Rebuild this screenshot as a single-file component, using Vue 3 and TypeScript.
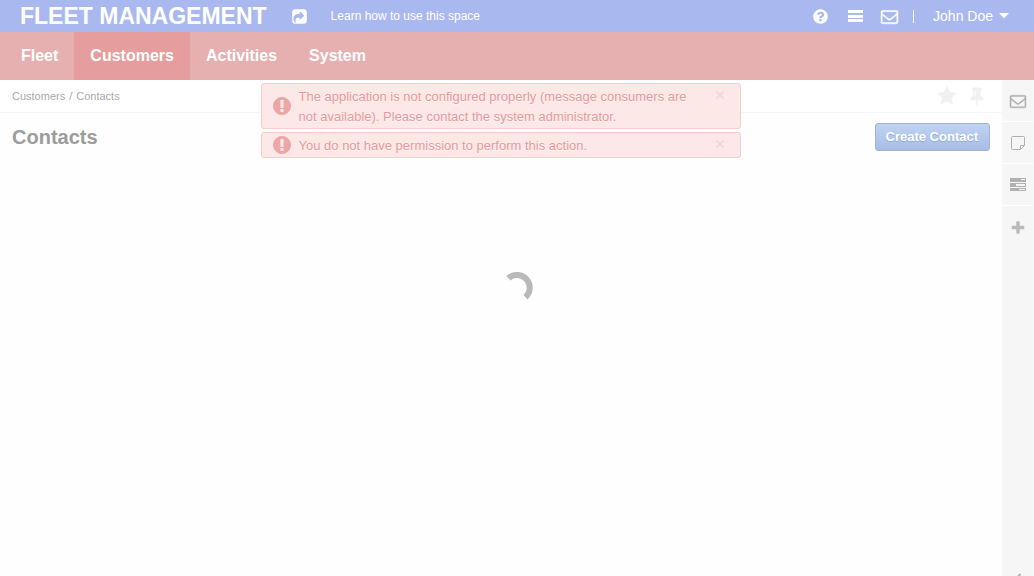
<script setup lang="ts">
import { ref } from 'vue'

interface Notice {
  id: number
  text: string
}

const sections: string[] = ['Fleet', 'Customers', 'Activities', 'System']
const activeSection = ref<string>('Customers')

const notices = ref<Notice[]>([
  {
    id: 1,
    text: 'The application is not configured properly (message consumers are not available). Please contact the system administrator.',
  },
  { id: 2, text: 'You do not have permission to perform this action.' },
])

function dismiss(id: number): void {
  notices.value = notices.value.filter((n) => n.id !== id)
}

const envelope =
  'M1664 1504v-768q-32 36-69 66-268 206-426 338-51 43-83 67t-86.500 48.500-102.500 24.500h-2q-48 0-102.500-24.500t-86.500-48.500-83-67q-158-132-426-338-37-30-69-66v768q0 13 9.500 22.500t22.500 9.500h1472q13 0 22.500-9.500t9.500-22.500zm0-1051v-24.500l-.5-13-3-12.500-5.500-9-9-7.500-14-2.500h-1472q-13 0-22.500 9.500t-9.500 22.500q0 168 147 284 193 152 401 317 6 5 35 29.500t46 37.500 44.500 31.500 50.500 27.500 43 9h2q20 0 43-9t50.500-27.500 44.500-31.500 46-37.500 35-29.500q208-165 401-317 54-43 100.500-115.500t46.500-131.500zm128-37v1088q0 66-47 113t-113 47h-1472q-66 0-113-47t-47-113v-1088q0-66 47-113t113-47h1472q66 0 113 47t47 113z'
</script>

<template>
  <div class="page">
    <header class="topbar">
      <a class="brand" href="#">FLEET MANAGEMENT</a>
      <a class="share" href="#" aria-label="Share">
        <svg class="glyph" viewBox="0 0 1792 1792"><path d="M1005 1197l352-352q19-19 19-45t-19-45l-352-352q-30-31-69-14-40 17-40 59v160q-119 0-216 19.500t-162.500 51-114 79-76.500 95.500-44.500 109-21.500 111.500-5 110.500q0 181 167 404 11 12 25 12 7 0 13-3 22-9 19-33-44-354 62-473 46-52 130-75.500t224-23.500v160q0 42 40 59 12 5 24 5 26 0 45-19zm659-781v960q0 119-84.500 203.500t-203.500 84.500h-960q-119 0-203.500-84.500t-84.500-203.500v-960q0-119 84.500-203.500t203.500-84.500h960q119 0 203.500 84.500t84.500 203.500z" /></svg>
      </a>
      <a class="learn" href="#">Learn how to use this space</a>
      <div class="tools">
        <button type="button" class="tool" aria-label="Help">
          <svg class="glyph" viewBox="0 0 1792 1792"><path d="M1024 1376v-192q0-14-9-23t-23-9h-192q-14 0-23 9t-9 23v192q0 14 9 23t23 9h192q14 0 23-9t9-23zm256-672q0-88-55.500-163t-138.500-116-170-41q-243 0-371 213-15 24 8 42l132 100q7 6 19 6 16 0 25-12 53-68 86-92 34-24 86-24 48 0 85.500 26t37.500 59q0 38-20 61t-68 45q-63 28-115.500 86.500t-52.500 125.500v36q0 14 9 23t23 9h192q14 0 23-9t9-23q0-19 21.500-49.500t54.500-49.500q32-18 49-28.500t46-35 44.500-48 28-60.500 12.500-81zm384 192q0 209-103 385.500t-279.500 279.500-385.500 103-385.500-103-279.500-279.500-103-385.500 103-385.500 279.500-279.500 385.500-103 385.500 103 279.500 279.500 103 385.500z" /></svg>
        </button>
        <button type="button" class="tool" aria-label="Menu">
          <svg class="glyph" viewBox="0 0 17 17"><path d="M1 2h15v3H1zM1 7h15v3H1zM1 11h15v3H1z" /></svg>
        </button>
        <button type="button" class="tool" aria-label="Messages">
          <svg class="glyph bold" viewBox="0 0 1792 1792"><path :d="envelope" /></svg>
        </button>
        <span class="divider"></span>
        <button type="button" class="user">
          John Doe
          <svg class="caret" viewBox="0 0 10 6"><path d="M0 0h10L5 5.500z" /></svg>
        </button>
      </div>
    </header>

    <nav class="nav">
      <a
        v-for="name in sections"
        :key="name"
        href="#"
        class="nav-link"
        :class="{ active: name === activeSection }"
        @click.prevent="activeSection = name"
      >{{ name }}</a>
    </nav>

    <div class="body">
      <main class="main">
        <div class="crumbs">
          <a href="#">Customers</a>
          <span>/</span>
          <span>Contacts</span>
          <div class="marks">
            <button type="button" class="mark" aria-label="Favorite">
              <svg class="mark-icon" viewBox="0 0 1792 1792"><path d="M1728 647q0 22-26 48l-363 354 86 500q1 7 1 20 0 21-10.500 35.500t-30.500 14.500q-19 0-40-12l-449-236-449 236q-22 12-40 12-21 0-31.500-14.500t-10.500-35.500q0-6 2-20l86-500-364-354q-25-27-25-48 0-37 56-46l502-73 225-455q19-41 49-41t49 41l225 455 502 73q56 9 56 46z" /></svg>
            </button>
            <button type="button" class="mark" aria-label="Pin">
              <svg class="mark-icon" viewBox="0 0 1792 1792"><path d="M800 864v-448q0-14-9-23t-23-9-23 9-9 23v448q0 14 9 23t23 9 23-9 9-23zm672 352q0 26-19 45t-45 19h-429l-51 483q-2 12-10.500 20.500t-20.500 8.500h-1q-27 0-32-27l-76-485h-404q-26 0-45-19t-19-45q0-123 78.500-221.500t177.500-98.500v-512q-52 0-90-38t-38-90 38-90 90-38h640q52 0 90 38t38 90-38 90-90 38v512q99 0 177.500 98.500t78.500 221.500z" /></svg>
            </button>
          </div>
        </div>

        <div class="heading">
          <h1>Contacts</h1>
          <button type="button" class="create">Create Contact</button>
        </div>

        <div class="loading" role="status" aria-label="Loading">
          <svg class="spinner" viewBox="0 0 32 32"><path d="M7.500 6.200A12.500 12.500 0 0 1 24.500 25.200" /></svg>
        </div>

        <div class="notices">
          <div v-for="notice in notices" :key="notice.id" class="notice" role="alert">
            <svg class="notice-icon" viewBox="128 128 1536 1536"><path d="M896 128q209 0 385.500 103t279.500 279.500 103 385.500-103 385.500-279.500 279.500-385.500 103-385.500-103-279.500-279.500-103-385.500 103-385.500 279.500-279.500 385.500-103zm128 1247v-190q0-14-9-23.500t-22-9.500h-192q-13 0-23 10t-10 23v190q0 13 10 23t23 10h192q13 0 22-9.500t9-23.500zm-2-344l18-621q0-12-10-18-10-8-24-8h-220q-14 0-24 8-10 6-10 18l17 621q0 10 10 17.500t24 7.500h185q14 0 23.500-7.500t10.500-17.500z" /></svg>
            <p>{{ notice.text }}</p>
            <button type="button" class="close" aria-label="Close" @click="dismiss(notice.id)">
              <svg viewBox="0 0 10 10"><path d="M1.500 1.500l7 7M8.500 1.500l-7 7" /></svg>
            </button>
          </div>
        </div>
      </main>

      <aside class="side">
        <button type="button" class="side-item" aria-label="Emails">
          <svg class="side-icon bold" viewBox="0 0 1792 1792"><path :d="envelope" /></svg>
        </button>
        <button type="button" class="side-item" aria-label="Notes">
          <svg class="side-icon line" viewBox="0 0 16 16"><path d="M10.500 14.500h-8a1 1 0 0 1-1-1v-11a1 1 0 0 1 1-1h11a1 1 0 0 1 1 1v8zM10.500 14.500v-4h4" /></svg>
        </button>
        <button type="button" class="side-item" aria-label="Tasks">
          <svg class="side-icon" viewBox="0 0 16 16"><path fill-rule="evenodd" d="M0 1h16v4H0zM11 2v1h4V2zM0 6h16v4H0zM6 7v2h9V7zM0 11h16v3H0zM9 12v1h6v-1z" /></svg>
        </button>
        <button type="button" class="side-item last" aria-label="Add">
          <svg class="side-icon" viewBox="0 0 1792 1792"><path d="M1600 736v192q0 40-28 68t-68 28h-416v416q0 40-28 68t-68 28h-192q-40 0-68-28t-28-68v-416h-416q-40 0-68-28t-28-68v-192q0-40 28-68t68-28h416v-416q0-40 28-68t68-28h192q40 0 68 28t28 68v416h416q40 0 68 28t28 68z" /></svg>
        </button>
        <button type="button" class="collapse" aria-label="Collapse sidebar">
          <svg viewBox="0 0 8 12"><path d="M6.500 1L1.500 6l5 5" /></svg>
        </button>
      </aside>
    </div>
  </div>
</template>

<style>
body {
  background: #fefefe;
}
</style>

<style scoped>
.page {
  display: flex;
  flex-direction: column;
  height: 100vh;
  overflow: hidden;
  font-family: 'Liberation Sans', Arial, sans-serif;
  font-size: 13px;
}

a {
  color: inherit;
  text-decoration: none;
}

button {
  padding: 0;
  border: 0;
  background: none;
  color: inherit;
  font: inherit;
  cursor: pointer;
}

svg {
  display: block;
  fill: currentColor;
}

.topbar {
  display: flex;
  flex: none;
  align-items: center;
  height: 32px;
  padding: 0 25px 0 20px;
  background: #aab8f0;
  color: #fff;
}

.brand {
  font-size: 23px;
  font-weight: bold;
  line-height: 32px;
}

.share {
  margin-left: 24px;
}

.learn {
  margin-left: 23px;
  font-size: 12px;
}

.glyph {
  width: 17px;
  height: 17px;
}

.bold {
  stroke: currentColor;
  stroke-width: 50;
  overflow: visible;
}

.tools {
  display: flex;
  align-items: center;
  margin-left: auto;
}

.tool {
  margin-right: 18px;
}

.tool + .tool {
  margin-right: 17px;
}

.divider {
  width: 1px;
  height: 13px;
  margin: 0 19px 0 -2px;
  background: #fff;
}

.user {
  display: flex;
  gap: 6px;
  align-items: center;
  font-size: 14px;
}

.caret {
  width: 10px;
  height: 6px;
}

.nav {
  display: flex;
  flex: none;
  height: 48px;
  padding-left: 5px;
  background: #e6b0b1;
}

.nav-link {
  padding: 0 16px;
  color: #fff;
  font-size: 16px;
  font-weight: bold;
  line-height: 48px;
}

.nav-link.active {
  background: #e59d9d;
}

.body {
  display: flex;
  flex: 1;
  min-height: 0;
}

.main {
  position: relative;
  flex: 1;
  min-width: 0;
}

.crumbs {
  display: flex;
  gap: 4px;
  align-items: center;
  height: 32px;
  padding: 0 15px 0 12px;
  border-bottom: 1px solid #f6f6f6;
  background: #fff;
  color: #a9a9a9;
  font-size: 11px;
}

.marks {
  display: flex;
  gap: 10px;
  margin-left: auto;
  color: #f1f1f1;
}

.mark-icon {
  width: 20px;
  height: 20px;
}

.heading {
  display: flex;
  align-items: center;
  justify-content: space-between;
  padding: 10px 12px;
}

h1 {
  margin: 0;
  color: #9c9c9c;
  font-size: 20px;
  line-height: 28px;
}

.create {
  height: 28px;
  padding: 0 11px 2px 10px;
  border: 1px solid #a3b3cd;
  border-radius: 3px;
  background: linear-gradient(#c0d3f2, #a7bde6);
  color: #fff;
  font-size: 13px;
  font-weight: bold;
  text-shadow: 0 1px 1px #94a8cc;
}

.loading {
  display: flex;
  justify-content: center;
  padding-top: 111px;
}

.spinner {
  width: 32px;
  height: 32px;
  margin-left: 32px;
  fill: none;
  stroke: #b9b9b9;
  stroke-width: 6;
}

.notices {
  position: absolute;
  top: 3px;
  right: 0;
  left: 0;
  display: flex;
  flex-direction: column;
  gap: 3px;
  width: 48%;
  margin: 0 auto;
}

.notice {
  display: flex;
  gap: 8px;
  align-items: center;
  padding: 2px 15px 2px 11px;
  border: 1px solid #f9cccc;
  border-radius: 3px;
  background: #fde8e8;
  color: #e69a9b;
}

.notice-icon {
  flex: none;
  width: 18px;
  height: 18px;
  color: #eca6a7;
}

.notice p {
  flex: 1;
  margin: 1px 0 -1px;
  line-height: 20px;
  text-shadow: 0 1px 0 #fff5f5;
}

.close {
  align-self: flex-start;
  margin: 4px 0 0 16px;
}

.close svg {
  width: 10px;
  height: 10px;
  fill: none;
  stroke: #f2d6d9;
  stroke-width: 2;
}

.side {
  display: flex;
  flex: none;
  flex-direction: column;
  width: 32px;
  background: #f6f6f6;
  color: #b0b0b0;
}

.side-item {
  display: flex;
  flex: none;
  align-items: center;
  justify-content: center;
  height: 42px;
  border-bottom: 1px solid #fff;
}

.side-item.last {
  height: 44px;
  border: 0;
  color: #b9b9b9;
}

.side-icon {
  width: 16px;
  height: 16px;
}

.side-icon.line {
  fill: none;
  stroke: currentColor;
  stroke-width: 1;
}

.collapse {
  display: flex;
  flex: none;
  justify-content: center;
  height: 12px;
  margin: auto 0 -9px;
}

.collapse svg {
  width: 8px;
  height: 12px;
  fill: none;
  stroke: currentColor;
  stroke-width: 2;
}
</style>
